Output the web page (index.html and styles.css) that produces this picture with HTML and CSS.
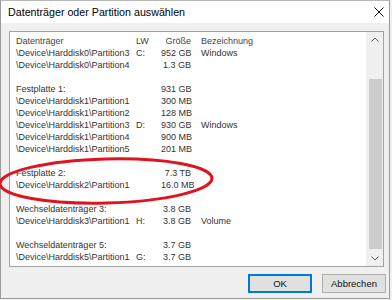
FILE: index.html
```html
<!DOCTYPE html>
<html>
<head>
  <title>Datenträger oder Partition auswählen</title>
  <link rel="stylesheet" href="styles.css">
</head>
<body>
  <div class="window">
    <div class="titlebar">
      <span class="title">Datenträger oder Partition auswählen</span>
      <svg class="close" width="10" height="10" viewBox="0 0 10 10">
        <path d="M0.5 0.5 L9.5 9.5 M9.5 0.5 L0.5 9.5" stroke="#111" stroke-width="1" fill="none"/>
      </svg>
    </div>
    <div class="content">
      <div class="listbox">
        <div class="rows">
          <div class="row head"><span class="c1">Datenträger</span><span class="c2">LW</span><span class="c3">Größe</span><span class="c4">Bezeichnung</span></div>
          <div class="row"><span class="c1">\Device\Harddisk0\Partition3</span><span class="c2">C:</span><span class="c3">952 GB</span><span class="c4">Windows</span></div>
          <div class="row"><span class="c1">\Device\Harddisk0\Partition4</span><span class="c2"></span><span class="c3">1.3 GB</span><span class="c4"></span></div>
          <div class="row empty"></div>
          <div class="row"><span class="c1">Festplatte 1:</span><span class="c2"></span><span class="c3">931 GB</span><span class="c4"></span></div>
          <div class="row"><span class="c1">\Device\Harddisk1\Partition1</span><span class="c2"></span><span class="c3">300 MB</span><span class="c4"></span></div>
          <div class="row"><span class="c1">\Device\Harddisk1\Partition2</span><span class="c2"></span><span class="c3">128 MB</span><span class="c4"></span></div>
          <div class="row"><span class="c1">\Device\Harddisk1\Partition3</span><span class="c2">D:</span><span class="c3">930 GB</span><span class="c4">Windows</span></div>
          <div class="row"><span class="c1">\Device\Harddisk1\Partition4</span><span class="c2"></span><span class="c3">900 MB</span><span class="c4"></span></div>
          <div class="row"><span class="c1">\Device\Harddisk1\Partition5</span><span class="c2"></span><span class="c3">201 MB</span><span class="c4"></span></div>
          <div class="row empty"></div>
          <div class="row"><span class="c1">Festplatte 2:</span><span class="c2"></span><span class="c3">7.3 TB</span><span class="c4"></span></div>
          <div class="row"><span class="c1">\Device\Harddisk2\Partition1</span><span class="c2"></span><span class="c3">16.0 MB</span><span class="c4"></span></div>
          <div class="row empty"></div>
          <div class="row"><span class="c1">Wechseldatenträger 3:</span><span class="c2"></span><span class="c3">3.8 GB</span><span class="c4"></span></div>
          <div class="row"><span class="c1">\Device\Harddisk3\Partition1</span><span class="c2">H:</span><span class="c3">3.8 GB</span><span class="c4">Volume</span></div>
          <div class="row empty"></div>
          <div class="row"><span class="c1">Wechseldatenträger 5:</span><span class="c2"></span><span class="c3">3.7 GB</span><span class="c4"></span></div>
          <div class="row"><span class="c1">\Device\Harddisk5\Partition1</span><span class="c2">G:</span><span class="c3">3.7 GB</span><span class="c4"></span></div>
        </div>
        <div class="scrollbar">
          <svg class="arrow" width="8" height="5" viewBox="0 0 8 5">
            <path d="M0.5 4.5 L4 1 L7.5 4.5" stroke="#606060" stroke-width="1" fill="none"/>
          </svg>
          <div class="track"><div class="thumb"></div></div>
          <svg class="arrow" width="8" height="5" viewBox="0 0 8 5">
            <path d="M0.5 0.5 L4 4 L7.5 0.5" stroke="#606060" stroke-width="1" fill="none"/>
          </svg>
        </div>
      </div>
      <div class="buttons">
        <button type="button" class="btn default">OK</button>
        <button type="button" class="btn">Abbrechen</button>
      </div>
    </div>
    <svg class="circle" width="230" height="60" viewBox="0 0 230 60">
      <ellipse cx="108" cy="30" rx="106" ry="22" transform="rotate(-1.5 108 30)" stroke="#e0141e" stroke-width="3" fill="none"/>
    </svg>
  </div>
</body>
</html>
```

FILE: styles.css
```css
body {
  margin: 0;
  background: #f0f0f0;
  font-family: "Liberation Sans", Arial, sans-serif;
}

.window {
  position: relative;
  width: 388px;
  height: 297px;
  border: 1px solid #9a9a9a;
  border-top-color: #b8b8b8;
  background: #f0f0f0;
}

.titlebar {
  height: 22px;
  background: #fff;
  display: flex;
  align-items: center;
  justify-content: space-between;
  padding: 0 5px 0 7px;
}

.title {
  font-size: 10.7px;
  color: #000;
}

.close {
  display: block;
}

.content {
  padding: 8px 0 0 8px;
}

.listbox {
  width: 373px;
  height: 234px;
  border: 1px solid #a3a3a3;
  background: #fff;
  display: flex;
  justify-content: space-between;
}

.rows {
  padding: 3px 0 0 6px;
}

.row {
  display: grid;
  grid-template-columns: 120px 25px 30px 120px;
  height: 12px;
  line-height: 12px;
  font-size: 9px;
  color: #333;
  white-space: nowrap;
}

.row.head {
  color: #444;
}

.c3 {
  text-align: right;
}

.c4 {
  padding-left: 10px;
}

.scrollbar {
  width: 17px;
  background: #f0f0f0;
  display: flex;
  flex-direction: column;
  align-items: center;
}

.arrow {
  display: block;
  margin: 5px 0;
}

.track {
  flex: 1;
  width: 100%;
  padding: 32px 1px 2px 3px;
  box-sizing: border-box;
}

.thumb {
  height: 100%;
  background: #cdcdcd;
}

.buttons {
  display: flex;
  justify-content: flex-end;
  gap: 10px;
  margin-top: 7px;
  padding-right: 3px;
}

.btn {
  width: 64px;
  height: 19px;
  padding: 0;
  font-family: inherit;
  font-size: 9.5px;
  color: #111;
  background: #e1e1e1;
  border: 1px solid #adadad;
}

.btn.default {
  border: 1px solid #0078d7;
  box-shadow: inset 0 0 0 1px #0078d7;
}

.circle {
  position: absolute;
  left: -3px;
  top: 150px;
}
```
